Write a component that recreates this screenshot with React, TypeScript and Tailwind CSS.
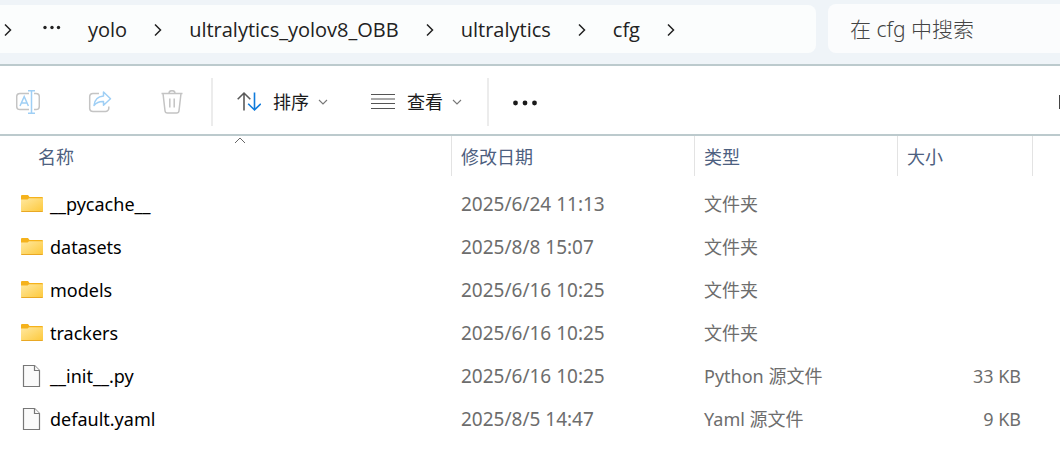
import React from 'react';

interface FileEntry {
  name: string;
  modified: string;
  type: string;
  size?: string;
  isFolder: boolean;
}

const path = ['yolo', 'ultralytics_yolov8_OBB', 'ultralytics', 'cfg'];

const columns = ['名称', '修改日期', '类型', '大小'];

const entries: FileEntry[] = [
  { name: '__pycache__', modified: '2025/6/24 11:13', type: '文件夹', isFolder: true },
  { name: 'datasets', modified: '2025/8/8 15:07', type: '文件夹', isFolder: true },
  { name: 'models', modified: '2025/6/16 10:25', type: '文件夹', isFolder: true },
  { name: 'trackers', modified: '2025/6/16 10:25', type: '文件夹', isFolder: true },
  { name: '__init__.py', modified: '2025/6/16 10:25', type: 'Python 源文件', size: '33 KB', isFolder: false },
  { name: 'default.yaml', modified: '2025/8/5 14:47', type: 'Yaml 源文件', size: '9 KB', isFolder: false },
];

const ChevronRight = () => (
  <svg className="w-2 h-3 shrink-0" viewBox="0 0 8 12" fill="none" stroke="#222" strokeWidth="1.5">
    <path d="M1 .5 6.5 6 1 11.5" />
  </svg>
);

const ChevronDown = () => (
  <svg className="w-2.5 h-2.5" viewBox="0 0 10 10" fill="none" stroke="#777" strokeWidth="1.1">
    <path d="M1 3l4 4 4-4" />
  </svg>
);

const RenameIcon = () => (
  <svg className="w-6 h-6" viewBox="0 0 24 24" fill="none" strokeWidth="1.5">
    <g stroke="#c4c4c4">
      <path d="M13 3.5H4A3.3 3.3 0 0 0 .7 6.8v9.4A3.3 3.3 0 0 0 4 19.5h9" />
      <path d="M18 3.5h2a3.3 3.3 0 0 1 3.3 3.3v9.4a3.3 3.3 0 0 1-3.3 3.3h-2" />
    </g>
    <g stroke="#9fcff5">
      <path d="M12 .8h7M12 23.2h7M15.5.8v22.4" />
      <path d="M4 16 8.2 6.5 12.4 16M5.5 13H11" />
    </g>
  </svg>
);

const ShareIcon = () => (
  <svg className="w-6 h-6" viewBox="0 0 24 24" fill="none" strokeWidth="1.5" strokeLinejoin="round">
    <path stroke="#c4c4c4" d="M11 3.5H5A3.3 3.3 0 0 0 1.7 6.8v12A3.3 3.3 0 0 0 5 21.5h12.5a3.3 3.3 0 0 0 3.3-3.3v-1.7" />
    <path stroke="#9fcff5" d="M15.5 2l7 6.8-7 6.5v-3.8c-4-.2-7 1-9.5 4 .5-5.5 4-9 9.500-9.500z" />
  </svg>
);

const TrashIcon = () => (
  <svg className="w-6 h-6" viewBox="0 0 24 24" fill="none" stroke="#c4c4c4" strokeWidth="1.5">
    <path d="M1.5 3.5h21M9 3.5a3 2.8 0 0 1 6 0M3 3.5l2 17.200A2.500 2.500 0 0 0 7.500 23h9a2.500 2.500 0 0 0 2.500-2.300L21 3.500M9.800 8.500v9M14.200 8.500v9" />
  </svg>
);

const SortIcon = () => (
  <svg className="w-6 h-6" viewBox="0 0 24 24" fill="none" strokeWidth="1.6">
    <path stroke="#5a5a5a" d="M7 20.5V3M.7 9.2 7 3l6.3 6.2" />
    <path stroke="#0f7bdc" d="M17.5 2.5V20M11.2 13.8l6.3 6.2 6.3-6.2" />
  </svg>
);

const ViewIcon = () => (
  <svg className="w-6 h-6" viewBox="0 0 24 24" fill="none" stroke="#555" strokeWidth="1.2">
    <path d="M0 4.5h24M0 9h24M0 13.5h24M0 18.5h24" />
  </svg>
);

const FolderIcon = () => (
  <svg className="w-[22px] h-[18px]" viewBox="0 0 22 18">
    <defs>
      <linearGradient id="folder" x1="0" y1="0" x2="1" y2="1">
        <stop offset="0" stopColor="#ffe8a0" />
        <stop offset="1" stopColor="#fdc93c" />
      </linearGradient>
    </defs>
    <path fill="#f5b21b" d="M0 1Q0 0 1 0h6l1.5 2H21q1 0 1 1v13H0z" />
    <path fill="url(#folder)" d="M0 4.5h6.5L8 3.3h14V16q0 .5-.5.5H.5Q0 16.500 0 16z" />
    <path fill="#e9a824" d="M0 16h22q0 1-1 1H1q-1 0-1-1z" />
  </svg>
);

const FileIcon = () => (
  <svg className="w-[22px] h-[22px]" viewBox="0 0 22 22" fill="#fafafa" stroke="#777" strokeWidth="1.2">
    <path d="M2.500.5h11l5 5v16h-16z" />
    <path d="M13.500.5v5h5" />
  </svg>
);

export default function App() {
  return (
    <div className="min-h-screen bg-white font-['Noto_Sans','Noto_Sans_CJK_SC',sans-serif] text-black">
      <header className="flex gap-3 bg-[#eff4f8] pt-1 pb-[11px] border-b-2 border-[#bccacd]">
        <nav
          aria-label="路径"
          className="flex flex-1 items-center gap-[27px] h-12 mt-px pt-0.5 pl-1 rounded-r-lg bg-[#fbfdfd] font-['Open_Sans','Noto_Sans_CJK_SC',sans-serif] text-[20px] text-[#222]"
        >
          <ChevronRight />
          <button aria-label="更多路径" className="w-[22px] h-5 shrink-0">
            <svg className="w-[22px] h-5" viewBox="0 0 22 20" fill="#222">
              <circle cx="6" cy="7.5" r="1.7" />
              <circle cx="13" cy="7.5" r="1.7" />
              <circle cx="19.5" cy="7.5" r="1.7" />
            </svg>
          </button>
          {path.map((part) => (
            <React.Fragment key={part}>
              <button>{part}</button>
              <ChevronRight />
            </React.Fragment>
          ))}
        </nav>
        <input
          type="search"
          aria-label="搜索"
          placeholder="在 cfg 中搜索"
          className="w-[232px] min-w-0 pt-0.5 pl-[22px] rounded-l-lg bg-[#fbfcfd] text-[21px] font-light placeholder:text-[#444] outline-none"
        />
      </header>

      <div className="flex items-center h-[70px] pt-1 pl-4 border-b-2 border-[#bccacd] text-[18px] text-[#1a1a1a]">
        <div className="flex gap-12">
          <button aria-label="重命名"><RenameIcon /></button>
          <button aria-label="共享"><ShareIcon /></button>
          <button aria-label="删除"><TrashIcon /></button>
        </div>
        <div className="w-0.5 h-12 ml-[27px] mr-6 bg-[#ececec]" />
        <button className="flex items-center gap-[9px]">
          <SortIcon />
          <span className="pl-[3px]">排序</span>
          <ChevronDown />
        </button>
        <button className="flex items-center gap-[9px] ml-[43px]">
          <ViewIcon />
          <span className="pl-[3px]">查看</span>
          <ChevronDown />
        </button>
        <div className="w-0.5 h-12 ml-[25px] mr-6 bg-[#ececec]" />
        <button aria-label="更多">
          <svg className="w-6 h-6" viewBox="0 0 24 24" fill="#1a1a1a">
            <circle cx="2.5" cy="13" r="2.4" />
            <circle cx="12" cy="13" r="2.4" />
            <circle cx="21.5" cy="13" r="2.4" />
          </svg>
        </button>
        <div className="w-px h-[14px] ml-auto bg-[#444]" />
      </div>

      <table className="w-full table-fixed text-left text-[18px]">
        <colgroup>
          <col className="w-[452px]" />
          <col className="w-[243px]" />
          <col className="w-[203px]" />
          <col className="w-[135px]" />
          <col />
        </colgroup>
        <thead>
          <tr className="h-[46px] align-top text-[#4d6080]">
            {columns.map((column, index) => (
              <th key={column} className="relative p-0 font-normal">
                <div className={`flex items-center h-10 pt-0.5 border-r border-[#e3e3e3] ${index === 0 ? 'pl-[38px]' : 'pl-[9px]'}`}>
                  {column}
                </div>
                {index === 0 && (
                  <svg className="absolute top-0 left-[234px] w-3 h-2" viewBox="0 0 12 8" fill="none" stroke="#666">
                    <path d="M1 7l5-5 5 5" />
                  </svg>
                )}
              </th>
            ))}
            <td />
          </tr>
        </thead>
        <tbody>
          {entries.map((entry) => (
            <tr key={entry.name} className="h-[43px] text-[#6d6d6d]">
              <td className="p-0 pl-[21px] text-black">
                <div className="flex items-center gap-[7px]">
                  {entry.isFolder ? <FolderIcon /> : <FileIcon />}
                  <span className="pt-0.5">{entry.name}</span>
                </div>
              </td>
              <td className="p-0 pt-0.5 pl-[9px] text-[19px]">{entry.modified}</td>
              <td className="p-0 pt-0.5 pl-[9px]">{entry.type}</td>
              <td className="p-0 pt-0.5 pr-3 text-right">{entry.size}</td>
              <td />
            </tr>
          ))}
        </tbody>
      </table>
    </div>
  );
}
